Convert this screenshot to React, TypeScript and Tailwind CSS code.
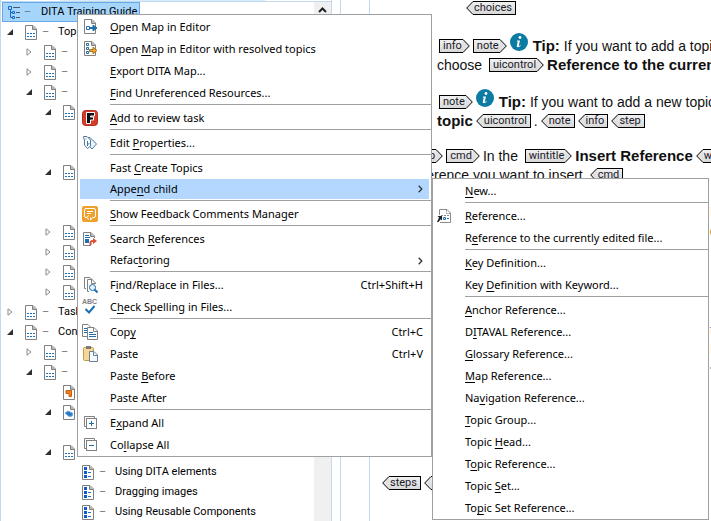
import type { ReactNode } from "react";

const MENU_FONT = "font-['Noto_Sans','Open_Sans',sans-serif]";
const TREE_FONT = "font-['Roboto','DejaVu_Sans',sans-serif]";
const EDITOR_FONT = "font-['Liberation_Sans',Arial,sans-serif]";

/* ---------- icons ---------- */

function Icon({ children }: { children: ReactNode }) {
  return (
    <svg width="16" height="16" viewBox="0 0 16 16" fill="none" className="shrink-0" aria-hidden="true">
      {children}
    </svg>
  );
}

function DocOutline() {
  return (
    <>
      <path d="M0.5 0.5H8L11.5 4V14.5H0.5Z" fill="#fff" stroke="#808080" />
      <path d="M7.5 0.5V4.5H11.5" fill="#b8b8b8" stroke="#808080" />
    </>
  );
}

type DocKind = "topic" | "list" | "orange" | "blue";

function DocIcon({ kind }: { kind: DocKind }) {
  return (
    <svg width="12" height="15" viewBox="0 0 12 15" fill="none" className="shrink-0" aria-hidden="true">
      <DocOutline />
      {kind === "topic" && (
        <path d="M2 8.5H4M5 8.5H7M8 8.5H10M2 11.5H4M5 11.5H7M8 11.5H10" stroke="#1f6fb0" />
      )}
      {kind === "list" && (
        <>
          <path d="M2 2h3v3H2zM2 6h3v3H2zM2 10h3v3H2z" fill="#0a5ad0" />
          <path d="M6 7.5H9M6 11.5H9" stroke="#2a6fc0" />
        </>
      )}
      {kind === "orange" && <path d="M3 5.5H8.5V11.5H6V8.5H3Z" fill="#f07c1a" stroke="#c86010" />}
      {kind === "blue" && (
        <path d="M2 8L5 6L10 8.5L9 11L6 11.5Z" fill="#2478cc" stroke="#6aa8e0" />
      )}
    </svg>
  );
}

function MapIcon() {
  return (
    <svg width="13" height="13" viewBox="0 0 13 13" fill="none" className="shrink-0" aria-hidden="true">
      <path d="M0.5 0.5H3.5V3.5H0.5ZM4.5 5.5H6.5V7.5H4.5ZM4.5 10.5H6.5V12.5H4.5ZM2.5 4V11.5H4M2.5 6.5H4" stroke="#1668c8" />
      <path d="M5 1.5H12M8 6.5H12M8 11.5H12" stroke="#4a5a6a" />
    </svg>
  );
}

const OpenMapIcon = () => (
  <Icon>
    <g transform="translate(2 0)">
      <DocOutline />
    </g>
    <path d="M4.5 7.5H7.5V10.5H4.5Z" fill="#fff" stroke="#1f6fb0" />
    <path d="M8 8.5H11V6L15 9L11 12V9.5H8Z" fill="#1f6fa5" stroke="#1f6fa5" />
  </Icon>
);

const OpenResolvedIcon = () => (
  <Icon>
    <g transform="translate(2 0)">
      <DocOutline />
    </g>
    <path d="M4.5 2.5H6.5V4.5H4.5ZM4.5 6.5H6.5V8.5H4.5ZM4.5 10.5H6.5V12.5H4.5Z" stroke="#1f6fb0" />
    <path d="M7.5 8.5H11V6L15 9.5L11 13V10.5H7.5Z" fill="#eda52c" stroke="#a8751c" />
  </Icon>
);

const ReviewIcon = () => (
  <Icon>
    <rect x="0.5" y="0.5" width="15" height="15" rx="3" fill="#d63c2c" stroke="#b03020" />
    <path d="M4.5 2.5H12.5V6H8.5V7H11.5V10H8.5V13.5H4.5Z" fill="#111" stroke="#fff" />
  </Icon>
);

const TagIcon = () => (
  <Icon>
    <path d="M5 2.5L8 2.5L14.5 9L10 14L5 8Z" fill="#eaf3fb" stroke="#3f7fb5" />
    <path d="M1.5 1.5H5L8.5 5V11L5.5 13.5L2.5 10V6Z" fill="#fff" stroke="#5b7890" />
    <path d="M5.5 6V11M7.5 8L5.5 10M3.5 4H4.5" stroke="#2b77b8" />
  </Icon>
);

const FeedbackIcon = () => (
  <Icon>
    <rect x="0" y="0" width="16" height="16" rx="2" fill="#f0a02c" />
    <path d="M5 11.5H4Q2.5 11.5 2.5 10V4Q2.5 2.5 4 2.5H12Q13.5 2.5 13.5 4V10Q13.5 11.5 12 11.5H10.5L8.5 14V11.5" stroke="#fff" />
    <path d="M5 5.5H11M5 7.5H9M7 9.5L4.5 11.5L7 13.5" stroke="#fff" />
  </Icon>
);

const SearchRefsIcon = () => (
  <Icon>
    <path d="M9 14.5H1.5V1.5H9L12.5 5V7" fill="#fff" stroke="#808080" />
    <path d="M8.5 1.5V5.5H12.5" fill="#b8b8b8" stroke="#808080" />
    <path d="M3 4.5H7M3 6.5H8" stroke="#1f6fb0" />
    <rect x="3" y="8" width="4" height="4" fill="#1f6fb0" />
    <path d="M8.5 14V11.5Q8.5 10 11 10" stroke="#d8503c" strokeWidth="2" />
    <path d="M11 7L15 10L11 13Z" fill="#d8503c" />
  </Icon>
);

const FindIcon = () => (
  <Icon>
    <path d="M4 11.5H2.5V0.5H8L10.5 3" stroke="#808080" />
    <path d="M7 14.5H5.5V2.5H10L13.5 6V7" fill="#fff" stroke="#808080" />
    <path d="M9.5 2.5V6.5H13.5" stroke="#808080" />
    <circle cx="10.5" cy="10.5" r="3" fill="#e6f2fb" stroke="#1f6fb0" />
    <path d="M12.5 12.5L15.5 15.5" stroke="#1f6fb0" strokeWidth="2" />
  </Icon>
);

const SpellIcon = () => (
  <Icon>
    <text x="0" y="5" className="fill-[#808080] font-['Liberation_Sans',sans-serif] text-[7px] font-bold">
      ABC
    </text>
    <path d="M3.5 10L7 13.5L12.5 7" stroke="#1f6fb0" strokeWidth="2" />
  </Icon>
);

const CopyIcon = () => (
  <Icon>
    <path d="M0.5 0.5H6L8.5 3V12.5H0.5Z" fill="#fff" stroke="#808080" />
    <path d="M2 4.5H6M2 6.5H6M2 8.5H6" stroke="#1f6fb0" />
    <path d="M5.5 3.5H12L15.5 7V15.5H5.5Z" fill="#fff" stroke="#808080" />
    <path d="M11.5 3.5V7.5H15.5" stroke="#808080" />
    <path d="M7 8.5H11M7 10.5H14M7 12.5H14" stroke="#1f6fb0" />
  </Icon>
);

const PasteIcon = () => (
  <Icon>
    <rect x="1.5" y="1.5" width="10" height="13" rx="1" fill="#f6d795" stroke="#c79a4a" />
    <rect x="4" y="0" width="5" height="3" fill="#7a7a7a" />
    <path d="M7.5 5.5H12L15.5 9V15.5H7.5Z" fill="#f4f9fd" stroke="#6a8296" />
    <path d="M11.5 5.5V9.5H15.5" stroke="#6a8296" />
  </Icon>
);

function BoxesIcon({ plus }: { plus: boolean }) {
  return (
    <Icon>
      <path d="M4 11.5H2.5V1.5H12.5V3" stroke="#808080" />
      <rect x="4.5" y="3.5" width="10" height="10" fill="#fff" stroke="#808080" />
      <path d={plus ? "M7 8.5H12M9.5 6V11" : "M7 8.5H12"} stroke="#1f6fa5" />
    </Icon>
  );
}

const ReferenceIcon = () => (
  <Icon>
    <path d="M2.5 7V1.5H10L13.5 5V14.5H3" stroke="#8c8c8c" />
    <path d="M9.5 1.5V5.5H13.5M4 7.5H12" stroke="#8c8c8c" strokeDasharray="2 1" />
    <path d="M6.5 9.5H8.5V11.5H6.5ZM10 10.5H12" stroke="#1f6fb0" />
    <path d="M0.5 8H5V12.5L3.7 11.2L1.5 14H0L2 9.5Z" fill="#222" />
  </Icon>
);

function InfoIcon() {
  return (
    <svg width="18" height="18" viewBox="0 0 18 18" className="mr-0.5 mb-2 shrink-0" aria-hidden="true">
      <circle cx="9" cy="9" r="9" fill="#0b7ba3" />
      <circle cx="10" cy="4.5" r="1.4" fill="#fff" />
      <path d="M7 7.5H10L8.7 13Q9.5 13 10.5 12L10.8 12.6Q9.5 14.3 7.8 14.3Q6.4 14 6.8 12.5L7.8 8.4H6.8Z" fill="#fff" />
    </svg>
  );
}

/* ---------- topic tree ---------- */

type TreeRow = { level: number; state?: "open" | "closed"; kind?: DocKind; label?: string };

const treeRows: TreeRow[] = [
  { level: 0, state: "open", kind: "topic", label: "Topics" },
  { level: 1, state: "closed", kind: "topic" },
  { level: 1, state: "closed", kind: "topic" },
  { level: 1, state: "open", kind: "topic" },
  { level: 2, state: "open", kind: "topic" },
  { level: 3 },
  { level: 3 },
  { level: 2, state: "open", kind: "topic" },
  { level: 3 },
  { level: 3 },
  { level: 2, state: "closed", kind: "topic" },
  { level: 2, state: "closed", kind: "topic" },
  { level: 2, state: "closed", kind: "topic" },
  { level: 2, state: "closed", kind: "topic" },
  { level: 0, state: "closed", kind: "topic", label: "Tasks" },
  { level: 0, state: "open", kind: "topic", label: "Concepts" },
  { level: 1, state: "closed", kind: "topic" },
  { level: 1, state: "open", kind: "topic" },
  { level: 2, kind: "orange" },
  { level: 2, state: "open", kind: "blue" },
  { level: 3 },
  { level: 2, state: "open", kind: "topic", label: "Managing Images in Topics" },
  { level: 3, kind: "list", label: "Using DITA elements" },
  { level: 3, kind: "list", label: "Dragging images" },
  { level: 3, kind: "list", label: "Using Reusable Components" },
];

const indents = ["pl-[5px]", "pl-6", "pl-[43px]", "pl-[62px]"];

function Twisty({ state }: { state?: "open" | "closed" }) {
  return (
    <svg width="6" height="8" viewBox="0 0 6 8" className="mr-3 shrink-0" aria-hidden="true">
      {state === "open" && <path d="M6 1V7H0Z" fill="#303030" />}
      {state === "closed" && <path d="M1 0.8L5 4L1 7.2Z" fill="#fff" stroke="#8a8a8a" />}
    </svg>
  );
}

function TopicTree() {
  return (
    <div className="flex min-w-0 flex-1 flex-col">
      <button type="button" className="flex h-5 w-[138px] shrink-0 items-center border border-[#66a7e8] bg-[#a6d5fb] pl-[5px] whitespace-nowrap">
        <MapIcon />
        <span className="w-5 pl-[3px] text-left text-[#777]">–</span>
        DITA Training Guide
      </button>
      {treeRows.map((row, i) => (
        <div key={i} className={`flex h-5 shrink-0 items-center whitespace-nowrap ${indents[row.level]}`}>
          <Twisty state={row.state} />
          {row.kind && (
            <>
              <DocIcon kind={row.kind} />
              <span className="w-[21px] pl-[5px] text-[#777]">–</span>
              {row.label}
            </>
          )}
        </div>
      ))}
    </div>
  );
}

/* ---------- editor ---------- */

function Tag({ name, close = false }: { name: string; close?: boolean }) {
  return (
    <span className={`inline-flex h-[14px] shrink-0 text-[11px] leading-3 text-[#1a1a2a] ${TREE_FONT}`}>
      {close && (
        <svg width="7" height="14" viewBox="0 0 7 14" aria-hidden="true">
          <path d="M7 0.5L0.7 7L7 13.5" fill="#e2e2e2" stroke="#000" />
        </svg>
      )}
      <span
        className={`border-y border-black bg-linear-to-b from-[#f0f0f0] to-[#d8d8d8] ${close ? "border-r pr-[3px] pl-px" : "border-l pr-px pl-[3px]"}`}
      >
        {name}
      </span>
      {!close && (
        <svg width="7" height="14" viewBox="0 0 7 14" aria-hidden="true">
          <path d="M0 0.5L6.3 7L0 13.5" fill="#e2e2e2" stroke="#000" />
        </svg>
      )}
    </span>
  );
}

function Bold({ children }: { children: ReactNode }) {
  return <b className="text-[15px]">{children}</b>;
}

function Line({ className = "", children }: { className?: string; children: ReactNode }) {
  return <div className={`flex h-[19px] shrink-0 items-center gap-[3px] whitespace-pre ${className}`}>{children}</div>;
}

function Editor() {
  return (
    <main className={`flex min-w-0 flex-1 flex-col overflow-hidden border-l border-[#c3d9ee] text-sm text-[#111] ${EDITOR_FONT}`}>
      <div className="flex h-[15px] shrink-0 items-center pl-24">
        <Tag name="choices" close />
      </div>
      <div className="mt-[21px] pl-[67px]">
        <Line className="pl-0.5">
          <Tag name="info" />
          <Tag name="note" />
          <InfoIcon />
          <span><Bold>Tip:</Bold> If you want to add a topic</span>
        </Line>
        <Line>
          <span>choose </span>
          <Tag name="uicontrol" />
          <Bold>Reference to the current</Bold>
        </Line>
      </div>
      <div className="mt-[18px] pl-[67px]">
        <Line className="pl-0.5">
          <Tag name="note" />
          <InfoIcon />
          <span><Bold>Tip:</Bold> If you want to add a new topic</span>
        </Line>
        <Line>
          <Bold>topic</Bold>
          <Tag name="uicontrol" close />
          <span>.</span>
          <Tag name="note" close />
          <Tag name="info" close />
          <Tag name="step" close />
        </Line>
      </div>
      <div className="mt-4 pl-10">
        <Line>
          <Tag name="step" />
          <Tag name="cmd" />
          <span>In the </span>
          <Tag name="wintitle" />
          <Bold>Insert Reference</Bold>
          <Tag name="wintitle" close />
        </Line>
        <Line>
          <span>reference you want to insert </span>
          <Tag name="cmd" close />
        </Line>
      </div>
      <div className="mt-[18px] pl-[340px]">
        <Line className="text-[#7a0000]">I</Line>
        <Line>e</Line>
      </div>
      <div className="mt-20 pl-[340px]">
        <Line className="text-[#1f6fb0]">t</Line>
        <Line className="text-[#7a0000]">I</Line>
        <Line><Tag name="cmd" close /></Line>
      </div>
      <Line className="mt-24 pl-3">
        <Tag name="steps" close />
        <Tag name="context" close />
      </Line>
    </main>
  );
}

/* ---------- menus ---------- */

type MenuItem = {
  label: string; // an ampersand stands before the mnemonic letter
  icon?: ReactNode;
  shortcut?: string;
  submenu?: boolean;
  active?: boolean;
};

const mapMenu: MenuItem[][] = [
  [
    { label: "&Open Map in Editor", icon: <OpenMapIcon /> },
    { label: "Open &Map in Editor with resolved topics", icon: <OpenResolvedIcon /> },
    { label: "&Export DITA Map..." },
    { label: "&Find Unreferenced Resources..." },
  ],
  [{ label: "&Add to review task", icon: <ReviewIcon /> }],
  [{ label: "Edit &Properties...", icon: <TagIcon /> }],
  [
    { label: "Fast &Create Topics" },
    { label: "Appe&nd child", submenu: true, active: true },
  ],
  [{ label: "&Show Feedback Comments Manager", icon: <FeedbackIcon /> }],
  [
    { label: "Search &References", icon: <SearchRefsIcon /> },
    { label: "Refac&toring", submenu: true },
  ],
  [
    { label: "F&ind/Replace in Files...", icon: <FindIcon />, shortcut: "Ctrl+Shift+H" },
    { label: "C&heck Spelling in Files...", icon: <SpellIcon /> },
  ],
  [
    { label: "Cop&y", icon: <CopyIcon />, shortcut: "Ctrl+C" },
    { label: "Paste", icon: <PasteIcon />, shortcut: "Ctrl+V" },
    { label: "Paste &Before" },
    { label: "Paste After" },
  ],
  [
    { label: "E&xpand All", icon: <BoxesIcon plus /> },
    { label: "Co&llapse All", icon: <BoxesIcon plus={false} /> },
  ],
];

const appendMenu: MenuItem[][] = [
  [{ label: "&New..." }],
  [
    { label: "&Reference...", icon: <ReferenceIcon /> },
    { label: "R&eference to the currently edited file..." },
  ],
  [{ label: "&Key Definition..." }, { label: "Key &Definition with Keyword..." }],
  [
    { label: "&Anchor Reference..." },
    { label: "D&ITAVAL Reference..." },
    { label: "&Glossary Reference..." },
    { label: "&Map Reference..." },
    { label: "Na&vigation Reference..." },
    { label: "&Topic Group..." },
    { label: "Topic &Head..." },
    { label: "T&opic Reference..." },
    { label: "Topic &Set..." },
    { label: "To&pic Set Reference..." },
  ],
];

function MenuLabel({ text }: { text: string }) {
  const at = text.indexOf("&");
  if (at < 0) return <span>{text}</span>;
  return (
    <span>
      {text.slice(0, at)}
      <span className="underline decoration-1 underline-offset-2 [text-decoration-skip-ink:none]">{text[at + 1]}</span>
      {text.slice(at + 2)}
    </span>
  );
}

function Menu({ groups, label, className }: { groups: MenuItem[][]; label: string; className: string }) {
  return (
    <div role="menu" aria-label={label} className={`absolute border border-[#a0a0a0] bg-white pt-px text-[11px] text-black ${MENU_FONT} ${className}`}>
      {groups.map((items, g) => (
        <div key={g}>
          {g > 0 && <div role="separator" className="ml-8 h-[3px] border-t border-[#a0a0a0]" />}
          {items.map((item) => (
            <button
              key={item.label}
              type="button"
              role="menuitem"
              className={`flex w-full items-center text-left whitespace-nowrap ${item.submenu ? "h-[21px]" : "h-[22px]"} ${item.active ? "border-r-2 border-b border-l-2 border-white bg-[#b3d7ff] pr-1.5" : "pr-2"}`}
            >
              <span className={`flex shrink-0 justify-center ${item.active ? "w-[30px]" : "w-8 pr-2"}`}>
                {item.icon}
              </span>
              <MenuLabel text={item.label} />
              {item.shortcut && <span className="ml-auto">{item.shortcut}</span>}
              {item.submenu && (
                <svg width="5" height="8" viewBox="0 0 5 8" className="ml-auto" fill="none" aria-hidden="true">
                  <path d="M0.7 0.8L3.8 4L0.7 7.2" stroke="#333" strokeWidth="1.3" />
                </svg>
              )}
            </button>
          ))}
        </div>
      ))}
    </div>
  );
}

export default function App() {
  return (
    <div className="relative flex h-screen overflow-hidden bg-white">
      <aside className={`flex w-[332px] shrink-0 flex-col border-x border-[#c3d9ee] text-[11px] text-black ${TREE_FONT}`}>
        <div className="h-0.5 shrink-0 border-b border-[#c3d9ee]">
          <div className="ml-[59px] h-px w-[205px] bg-[#d5ecfb]" />
        </div>
        <div className="flex min-h-0 flex-1 pl-px">
          <TopicTree />
          <div className="w-[17px] shrink-0 bg-[#f0f0f0]">
            <svg width="17" height="17" viewBox="0 0 17 17" fill="none" aria-hidden="true">
              <path d="M5 10L8.5 6.5L12 10" stroke="#222" strokeWidth="2" />
            </svg>
          </div>
        </div>
      </aside>
      <div className="ml-2 w-[29px] shrink-0 border-l border-[#c3d9ee]" />
      <Editor />

      <Menu groups={mapMenu} label="Map actions" className="top-3.5 left-[77px] w-[355px]" />
      <Menu groups={appendMenu} label="Append child" className="top-[178px] left-[432px] w-[277px]" />
    </div>
  );
}
